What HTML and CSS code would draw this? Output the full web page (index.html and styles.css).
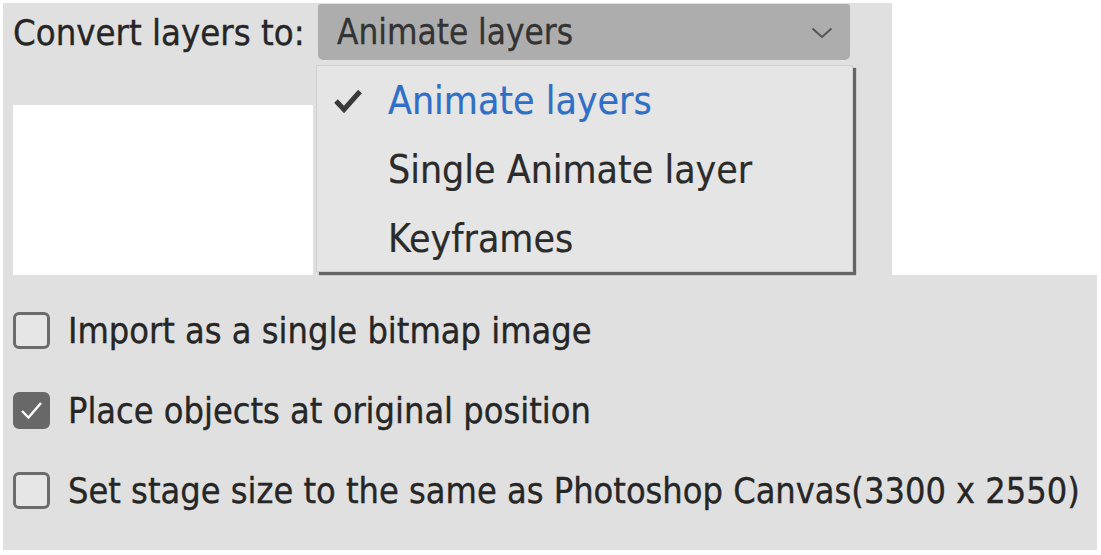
FILE: index.html
```html
<!DOCTYPE html>
<html lang="en">
<head>
<meta charset="utf-8">
<title>Convert layers</title>
<link rel="stylesheet" href="styles.css">
</head>
<body>
<div class="dialog">
  <section class="top">
    <div class="convert-row">
      <span class="label">Convert layers to:</span>
      <div class="select">
        <span class="select-value">Animate layers</span>
        <svg class="chevron" width="22" height="12" viewBox="0 0 22 12"><path d="M1.5 1.5 L11 10 L20.5 1.5" fill="none" stroke="#555" stroke-width="2"/></svg>
      </div>
    </div>
    <div class="preview"></div>
  </section>
  <section class="bottom">
    <label class="option">
      <span class="box"></span>
      <span class="option-text">Import as a single bitmap image</span>
    </label>
    <label class="option">
      <span class="box checked"><svg width="25" height="21" viewBox="0 0 25 21"><path d="M3 11 L9.5 17.5 L22 3" fill="none" stroke="#fff" stroke-width="2.4"/></svg></span>
      <span class="option-text">Place objects at original position</span>
    </label>
    <label class="option">
      <span class="box"></span>
      <span class="option-text">Set stage size to the same as Photoshop Canvas(3300 x 2550)</span>
    </label>
  </section>
  <ul class="menu">
    <li class="menu-item selected">
      <svg class="tick" width="30" height="26" viewBox="0 0 30 26"><path d="M3 13 L11 21.5 L27 3.5" fill="none" stroke="#3a3a3a" stroke-width="5"/></svg>
      <span>Animate layers</span>
    </li>
    <li class="menu-item"><span>Single Animate layer</span></li>
    <li class="menu-item"><span>Keyframes</span></li>
  </ul>
</div>
</body>
</html>
```
FILE: styles.css
```css
html, body {
  margin: 0;
  padding: 0;
  background: #ffffff;
}

body {
  font-family: "DejaVu Sans Condensed", "DejaVu Sans", sans-serif;
  color: #262626;
  width: 1101px;
  height: 555px;
  overflow: hidden;
}

.dialog {
  position: relative;
  display: flex;
  flex-direction: column;
  align-items: flex-start;
  padding: 3px 0 0 3px;
}

.top {
  width: 889px;
  height: 272px;
  box-sizing: border-box;
  background: #e0e0e0;
  padding: 1px 0 0 10px;
  display: flex;
  flex-direction: column;
}

.convert-row {
  display: flex;
  align-items: center;
  height: 56px;
}

.label {
  font-size: 36.2px;
  width: 305px;
  white-space: nowrap;
  -webkit-text-stroke: 0.35px #262626;
}

.select {
  width: 532px;
  height: 56px;
  box-sizing: border-box;
  background: #adadad;
  border-radius: 3px 3px 5px 5px;
  display: flex;
  align-items: center;
  justify-content: space-between;
  padding: 0 17px 0 19px;
}

.select-value {
  font-size: 34.8px;
  color: #333;
  -webkit-text-stroke: 0.3px #333;
}

.chevron {
  margin-top: 2px;
}

.preview {
  margin-top: 45px;
  width: 300px;
  flex: 1;
  background: #ffffff;
}

.bottom {
  width: 1094px;
  height: 275px;
  box-sizing: border-box;
  background: #e0e0e0;
  padding: 37px 0 0 10px;
  display: flex;
  flex-direction: column;
  gap: 43px;
}

.option {
  display: flex;
  align-items: center;
  height: 37px;
  gap: 18px;
}

.box {
  width: 37px;
  height: 37px;
  box-sizing: border-box;
  border: 3px solid #6c6c6c;
  border-radius: 6px;
  background: #e6e6e6;
  display: flex;
  align-items: center;
  justify-content: center;
}

.box.checked {
  background: #686868;
  border-color: #686868;
}

.option-text {
  font-size: 35.8px;
  white-space: nowrap;
  -webkit-text-stroke: 0.35px #262626;
}

.menu {
  position: absolute;
  left: 316px;
  top: 65px;
  width: 537px;
  height: 207px;
  box-sizing: border-box;
  margin: 0;
  padding: 0;
  list-style: none;
  background: #e5e5e5;
  border: 1px solid #cfcfcf;
  box-shadow: 3px 3px 1px rgba(60, 60, 60, 0.75);
}

.menu-item {
  position: relative;
  height: 69px;
  display: flex;
  align-items: center;
  padding-left: 71px;
  font-size: 38.9px;
  color: #2b2b2b;
  white-space: nowrap;
  -webkit-text-stroke: 0.2px #2b2b2b;
}

.menu-item.selected {
  color: #2f6fc8;
  -webkit-text-stroke: 0.2px #2f6fc8;
}

.tick {
  position: absolute;
  left: 16px;
  top: 22px;
}
```
